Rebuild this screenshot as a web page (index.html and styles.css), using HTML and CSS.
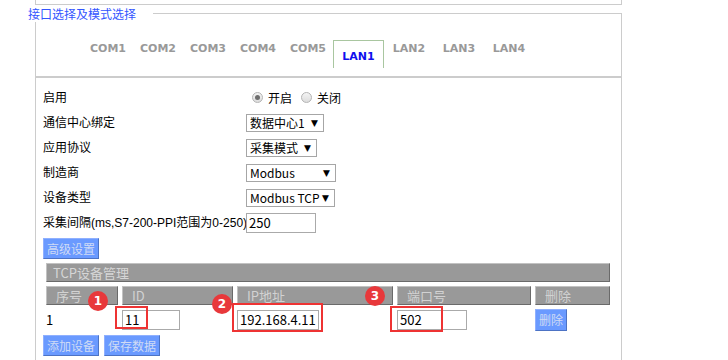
FILE: index.html
```html
<!DOCTYPE html>
<html lang="zh-CN">
<head>
  <meta charset="UTF-8" />
  <title>接口选择及模式选择</title>
  <link rel="stylesheet" href="styles.css">
</head>
<body>

  <div class="prev-box"></div>

  <div class="group">
    <div class="legend">接口选择及模式选择</div>

    <div class="tabs">
      <span class="tab">COM1</span>
      <span class="tab">COM2</span>
      <span class="tab">COM3</span>
      <span class="tab">COM4</span>
      <span class="tab">COM5</span>
      <span class="tab active">LAN1</span>
      <span class="tab">LAN2</span>
      <span class="tab">LAN3</span>
      <span class="tab">LAN4</span>
    </div>

    <div class="panel">
      <div class="form">
        <div class="label">启用</div>
        <div class="field">
          <span class="radio checked"></span><span class="radio-text">开启</span>
          <span class="radio"></span><span class="radio-text">关闭</span>
        </div>

        <div class="label">通信中心绑定</div>
        <div class="field"><div class="sel w78"><span>数据中心1</span><i>▼</i></div></div>

        <div class="label">应用协议</div>
        <div class="field"><div class="sel w71"><span>采集模式</span><i>▼</i></div></div>

        <div class="label">制造商</div>
        <div class="field"><div class="sel w90"><span>Modbus</span><i>▼</i></div></div>

        <div class="label">设备类型</div>
        <div class="field"><div class="sel w89"><span>Modbus TCP</span><i>▼</i></div></div>

        <div class="label">采集间隔(ms,S7-200-PPI范围为0-250)</div>
        <div class="field"><div class="input w70">250</div></div>
      </div>

      <button class="btn">高级设置</button>

      <div class="tcp">
        <div class="tcp-title">TCP设备管理</div>
        <div class="grid">
          <div class="th">序号</div>
          <div class="th">ID</div>
          <div class="th">IP地址</div>
          <div class="th">端口号</div>
          <div class="th">删除</div>

          <div class="td">1</div>
          <div class="td"><div class="input w58">11</div></div>
          <div class="td"><div class="input w82">192.168.4.11</div></div>
          <div class="td"><div class="input w70">502</div></div>
          <div class="td"><button class="btn small">删除</button></div>
        </div>

        <!-- annotation marks -->
        <div class="mark mark-1"></div>
        <div class="mark mark-2"></div>
        <div class="mark mark-3"></div>
        <div class="num num-1">1</div>
        <div class="num num-2">2</div>
        <div class="num num-3">3</div>
      </div>

      <div class="actions">
        <button class="btn">添加设备</button>
        <button class="btn">保存数据</button>
      </div>
    </div>
  </div>

</body>
</html>
```

FILE: styles.css
```css
body {
  margin: 0;
  background: #fff;
  color: #000;
  font-family: 'Liberation Sans', 'Noto Sans CJK SC', sans-serif;
  font-size: 12px;
}

.prev-box {
  margin-left: 35px;
  width: 585px;
  height: 4px;
  border: 1px solid #ccc;
  border-top: none;
}

.group {
  position: relative;
  margin-top: 8px;
  margin-left: 35px;
  width: 585px;
  height: 360px;
  border: 1px solid #ccc;
  border-bottom: none;
}

.legend {
  position: absolute;
  top: -8px;
  left: -8px;
  padding-right: 17px;
  background: #fff;
  color: #3355ff;
  font-family: 'Noto Sans CJK SC', sans-serif;
  line-height: 16px;
}

.tabs {
  display: flex;
  align-items: flex-start;
  height: 28px;
  padding: 26px 0 8px 47px;
  border-bottom: 2px solid #ccc;
}

.tab {
  width: 50px;
  padding-top: 2px;
  text-align: center;
  font-family: 'DejaVu Sans', sans-serif;
  font-weight: bold;
  font-size: 11px;
  line-height: 14px;
  color: #999;
}

.tab.active {
  box-sizing: border-box;
  width: 51px;
  height: 28px;
  padding-top: 9px;
  border: 1px solid #a9c6a0;
  border-bottom: none;
  color: #1010ee;
}

.panel {
  padding: 7px 0 0 7px;
}

.form {
  display: grid;
  grid-template-columns: 203px auto;
  grid-auto-rows: 25px;
  align-items: center;
}

.label {
  line-height: 16px;
  white-space: nowrap;
}

.field {
  display: flex;
  align-items: center;
}

.radio {
  box-sizing: border-box;
  position: relative;
  width: 11px;
  height: 11px;
  margin-left: 6px;
  border: 1px solid #b4b4b4;
  border-radius: 50%;
  background: linear-gradient(#f4f4f4, #dcdcdc);
}

.radio.checked::after {
  content: '';
  position: absolute;
  top: 2px;
  left: 2px;
  width: 5px;
  height: 5px;
  border-radius: 50%;
  background: #6e6e6e;
}

.radio-text {
  margin-left: 5px;
  margin-right: 3px;
}

.sel {
  box-sizing: border-box;
  display: flex;
  justify-content: space-between;
  align-items: center;
  height: 18px;
  padding: 0 5px 0 3px;
  border: 1px solid #a6a6a6;
  font-family: 'Noto Sans CJK SC', sans-serif;
  font-size: 12px;
  line-height: 16px;
  white-space: nowrap;
}

.sel i {
  font-style: normal;
  font-family: 'DejaVu Sans', sans-serif;
  font-size: 9px;
}

.w58 { width: 58px; }
.w70 { width: 70px; }
.w71 { width: 71px; }
.w78 { width: 78px; }
.w82 { width: 82px; }
.w89 { width: 89px; }
.w90 { width: 90px; }

.input {
  box-sizing: border-box;
  height: 20px;
  padding-left: 2px;
  border: 1px solid #aaa;
  font-family: 'Noto Sans CJK SC', sans-serif;
  font-size: 13px;
  line-height: 18px;
  white-space: nowrap;
}

.btn {
  height: 21px;
  margin: 3px 0 0;
  padding: 0 3px;
  border: 1px solid;
  border-color: #8fb0ff #4d73c4 #4d73c4 #8fb0ff;
  background: #6a9aff;
  color: #cfdaf5;
  font-family: 'Noto Sans CJK SC', sans-serif;
  font-size: 12px;
  line-height: 19px;
}

.btn.small {
  height: 22px;
  margin: 0;
  padding: 0 3px;
}

.tcp {
  position: relative;
  width: 564px;
  margin: 4px 0 0 3px;
}

.tcp-title {
  box-sizing: border-box;
  height: 19px;
  padding-left: 6px;
  border: 1px solid;
  border-color: #c2c2c2 #6a6a6a #6a6a6a #c2c2c2;
  background: #999;
  color: #d6d6d6;
  font-family: 'Noto Sans CJK SC', sans-serif;
  font-size: 13px;
  line-height: 17px;
}

.grid {
  display: grid;
  grid-template-columns: 72px 111px 156px 134px 75px;
  column-gap: 4px;
  grid-template-rows: 19px 29px;
  margin-top: 4px;
}

.th {
  box-sizing: border-box;
  padding-left: 9px;
  border: 1px solid;
  border-color: #c2c2c2 #6a6a6a #6a6a6a #c2c2c2;
  background: #999;
  color: #d2d2d2;
  font-family: 'Noto Sans CJK SC', sans-serif;
  font-size: 13px;
  line-height: 17px;
}

.td {
  display: flex;
  align-items: center;
  font-family: 'Noto Sans CJK SC', sans-serif;
  font-size: 13px;
}

.mark {
  position: absolute;
  box-sizing: border-box;
  border: 2px solid #ee3333;
}

.mark-1 { left: 69px; top: 43px; width: 33px; height: 23px; }
.mark-2 { left: 186px; top: 40px; width: 91px; height: 29px; }
.mark-3 { left: 344px; top: 43px; width: 53px; height: 26px; }

.num {
  position: absolute;
  width: 20px;
  height: 20px;
  border-radius: 50%;
  background: #e8383b;
  color: #fff;
  font-family: 'DejaVu Sans', sans-serif;
  font-weight: bold;
  font-size: 12px;
  line-height: 20px;
  text-align: center;
}

.num-1 { left: 42px; top: 28px; }
.num-2 { left: 166px; top: 31px; }
.num-3 { left: 319px; top: 23px; }

.actions {
  display: flex;
  gap: 5px;
  margin-top: -2px;
}
```
